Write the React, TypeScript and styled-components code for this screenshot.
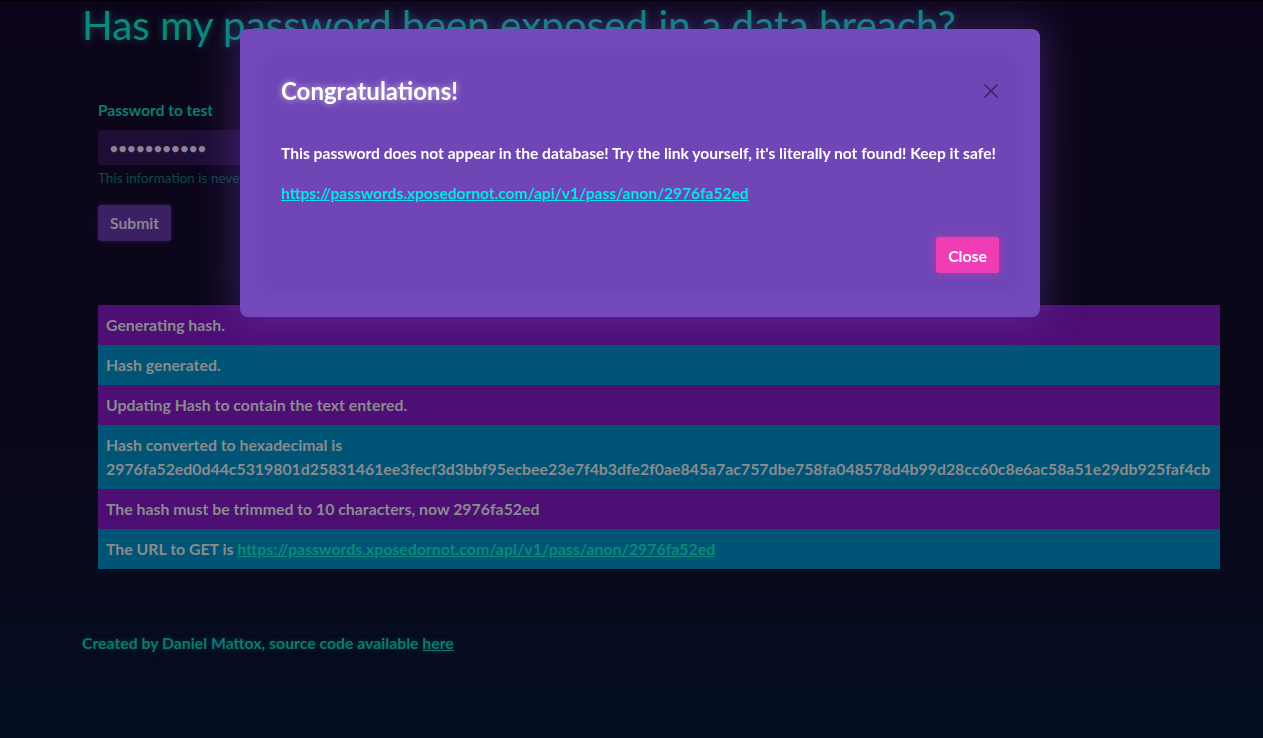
import React from "react";
import styled, { createGlobalStyle } from "styled-components";

const Global = createGlobalStyle`
  html, body { margin: 0; padding: 0; }
  body {
    min-height: 738px;
    background: linear-gradient(180deg, #0c0519 0%, #0a0719 60%, #050e22 100%);
    border-top: 1px solid #000;
    font-family: Lato, "Open Sans", sans-serif;
    overflow: hidden;
  }
  #root { min-height: 737px; }
`;

const Page = styled.main`
  padding: 0 43px 0 82px;
`;

const Title = styled.h1`
  margin: 0;
  font-size: 40.4px;
  line-height: 47px;
  font-weight: 400;
  color: #0c897f;
  text-shadow: 0 0 8px rgba(20, 160, 150, 0.45);
  white-space: nowrap;
`;

const Form = styled.form`
  margin: 52px 0 0 16px;
  display: flex;
  flex-direction: column;
  align-items: flex-start;
`;

const Label = styled.label`
  font-size: 15.5px;
  line-height: 20px;
  font-weight: 700;
  color: #0b7d72;
`;

const Input = styled.div`
  margin-top: 10px;
  box-sizing: border-box;
  width: 560px;
  height: 35px;
  padding: 0 12px;
  display: flex;
  align-items: center;
  background: #1e0e36;
  border-radius: 3px;
  color: #8b8294;
  font-size: 13px;
  letter-spacing: 1px;
`;

const Help = styled.small`
  margin-top: 4px;
  font-size: 13.5px;
  line-height: 18px;
  color: #0b4a4c;
`;

const Submit = styled.button`
  margin-top: 18px;
  height: 36px;
  padding: 0 12px;
  border: none;
  border-radius: 3px;
  background: #3a2163;
  color: #8b8294;
  font-family: inherit;
  font-size: 15.7px;
  font-weight: 700;
  box-shadow: 0 0 4px rgba(90, 50, 150, 0.4);
`;

const Log = styled.ul`
  list-style: none;
  margin: 64px 0 0 16px;
  padding: 0;
`;

const Row = styled.li<{ $alt: boolean }>`
  padding: 8px;
  background: ${(p) => (p.$alt ? "#005476" : "#4d0f74")};
  color: #8b8b8e;
  font-size: 15.85px;
  line-height: 24px;
  font-weight: 700;
  word-break: break-all;
`;

const DimLink = styled.a`
  color: #0a8a78;
  text-decoration: underline;
`;

const Footer = styled.footer`
  margin-top: 64px;
  font-size: 15.8px;
  line-height: 20px;
  font-weight: 700;
  color: #0b7a70;
  text-shadow: 0 0 6px rgba(20, 140, 130, 0.35);
`;

const FootLink = styled.a`
  color: #0b7a70;
  text-decoration: underline;
`;

const Backdrop = styled.div`
  position: fixed;
  inset: 0;
  display: flex;
  justify-content: center;
  align-items: flex-start;
  padding: 29px 0 0 17px;
`;

const Dialog = styled.div`
  box-sizing: border-box;
  width: 800px;
  padding: 28px 25px 27px;
  background: #7449bb;
  border-radius: 8px;
  box-shadow: 0 0 40px 6px rgba(120, 70, 200, 0.35);
`;

const Content = styled.div`
  background: #7046b7;
  border-radius: 6px;
  box-shadow: 0 0 12px rgba(90, 50, 160, 0.25);
`;

const Header = styled.div`
  display: flex;
  justify-content: space-between;
  align-items: center;
  padding: 18px 16px 20px;
`;

const ModalTitle = styled.h2`
  margin: 0;
  font-size: 24px;
  line-height: 32px;
  font-weight: 700;
  color: #fff;
  text-shadow: 0 0 6px rgba(255, 255, 255, 0.6);
`;

const CloseX = styled.button`
  width: 16px;
  height: 24px;
  padding: 0;
  border: none;
  background: none;
  display: flex;
  align-items: center;
  justify-content: center;
  color: #3b2262;
`;

const Body = styled.div`
  padding: 16px 16px 0;
  font-size: 15.6px;
  line-height: 20px;
  font-weight: 700;
  color: #fff;
  white-space: nowrap;
`;

const Para = styled.p`
  margin: 0 0 20px;
`;

const CyanLink = styled.a`
  color: #00e8e8;
  font-size: 15.5px;
  text-decoration: underline;
`;

const Actions = styled.div`
  display: flex;
  justify-content: flex-end;
  padding: 14px 16px 17px;
`;

const CloseBtn = styled.button`
  height: 36px;
  padding: 0 12px;
  border: none;
  border-radius: 3px;
  background: #f03db5;
  color: #fff;
  font-family: inherit;
  font-size: 15.8px;
  font-weight: 700;
  box-shadow: 0 0 8px rgba(240, 60, 180, 0.45);
`;

const url = "https://passwords.xposedornot.com/api/v1/pass/anon/2976fa52ed";

export default function App() {
  const rows: React.ReactNode[] = [
    "Generating hash.",
    "Hash generated.",
    "Updating Hash to contain the text entered.",
    <>
      Hash converted to hexadecimal is
      <br />
      2976fa52ed0d44c5319801d25831461ee3fecf3d3bbf95ecbee23e7f4b3dfe2f0ae845a7ac757dbe758fa048578d4b99d28cc60c8e6ac58a51e29db925faf4cb
    </>,
    "The hash must be trimmed to 10 characters, now 2976fa52ed",
    <>
      The URL to GET is <DimLink href="#">{url}</DimLink>
    </>,
  ];
  return (
    <>
      <Global />
      <Page>
        <Title>Has my password been exposed in a data breach?</Title>
        <Form onSubmit={(e) => e.preventDefault()}>
          <Label>Password to test</Label>
          <Input>●●●●●●●●●●●</Input>
          <Help>This information is never stored or sent anywhere.</Help>
          <Submit type="submit">Submit</Submit>
        </Form>
        <Log>
          {rows.map((r, i) => (
            <Row key={i} $alt={i % 2 === 1}>
              {r}
            </Row>
          ))}
        </Log>
        <Footer>
          Created by Daniel Mattox, source code available <FootLink href="#">here</FootLink>
        </Footer>
      </Page>
      <Backdrop>
        <Dialog>
          <Content>
            <Header>
              <ModalTitle>Congratulations!</ModalTitle>
              <CloseX aria-label="close">
                <svg width="16" height="16" viewBox="0 0 16 16">
                  <path d="M1.5 1.5 L14.5 14.5 M14.5 1.5 L1.5 14.5" stroke="currentColor" strokeWidth="1.6" />
                </svg>
              </CloseX>
            </Header>
            <Body>
              <Para>
                This password does not appear in the database! Try the link yourself, it's literally not found! Keep it safe!
              </Para>
              <Para>
                <CyanLink href="#">{url}</CyanLink>
              </Para>
            </Body>
            <Actions>
              <CloseBtn>Close</CloseBtn>
            </Actions>
          </Content>
        </Dialog>
      </Backdrop>
    </>
  );
}
